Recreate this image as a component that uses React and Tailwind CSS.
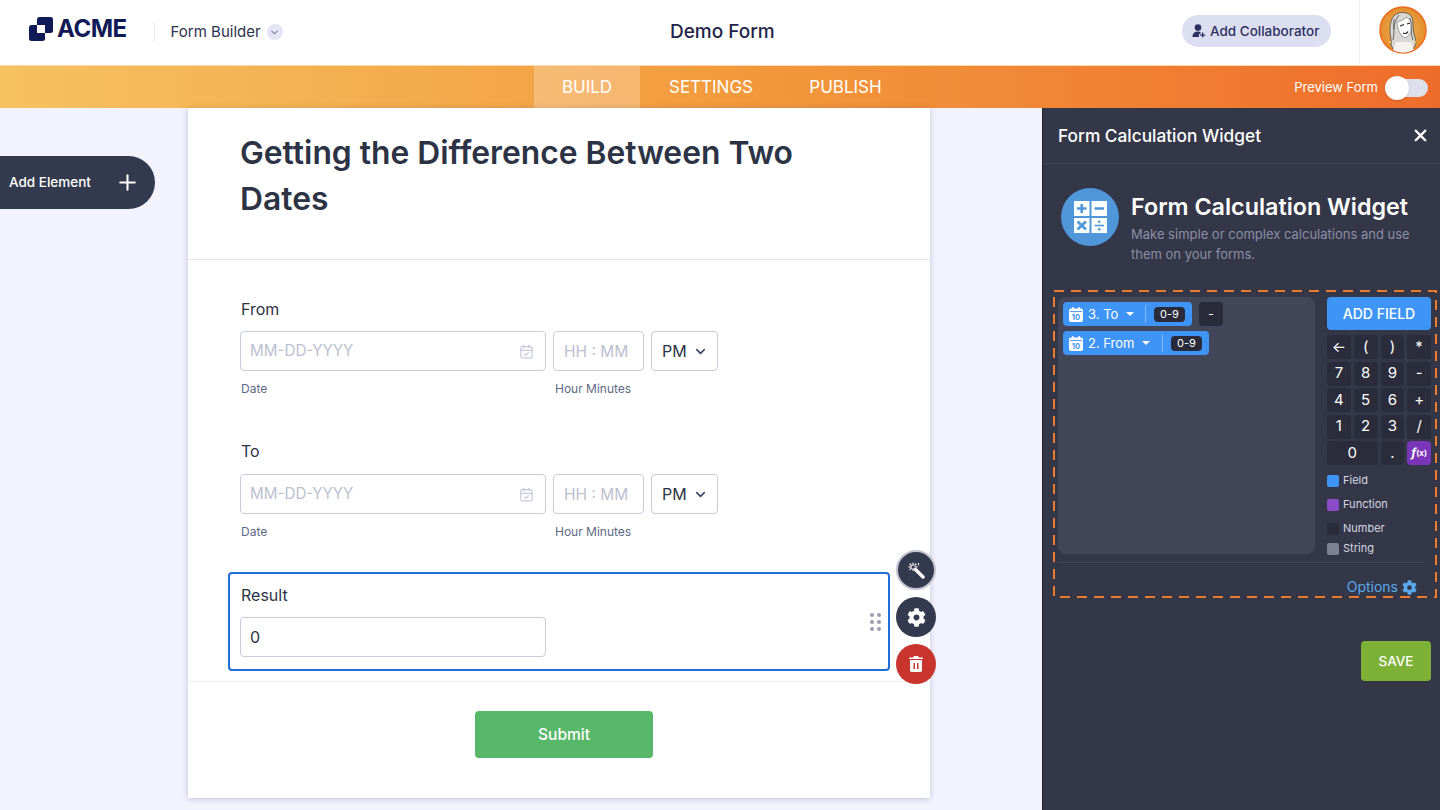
import React from "react";
import { FaCog } from "react-icons/fa";
import { LuCalendarCheck, LuChevronDown, LuPlus } from "react-icons/lu";
import { FaXmark } from "react-icons/fa6";

function Logo() {
  return (
    <svg width="24" height="24" viewBox="0 0 24 24">
      <rect x="8" y="0" width="16" height="16" rx="2.5" fill="#0f1a56" />
      <rect x="0" y="8" width="16" height="16" rx="2.5" fill="#0f1a56" />
      <rect x="8" y="8" width="8" height="8" fill="#fff" />
    </svg>
  );
}

function Avatar() {
  return (
    <svg width="48" height="48" viewBox="0 0 48 48">
      <defs>
        <radialGradient id="avatarBg" cx="50%" cy="50%" r="55%">
          <stop offset="0%" stopColor="#f0b55c" />
          <stop offset="100%" stopColor="#e28a28" />
        </radialGradient>
        <clipPath id="avatarClip">
          <circle cx="24" cy="24" r="22.500" />
        </clipPath>
      </defs>
      <circle cx="24" cy="24" r="23" fill="url(#avatarBg)" stroke="#ee6a1f" strokeWidth="1.500" />
      <g clipPath="url(#avatarClip)">
        <path d="M12 16c1-7 8-11 15-9 5 1 7 5 7 10 0 5 0 9 2 14 1 4 1 7 0 9l-6 8H17l-5-9c1-5-1-9-1-13 0-4 0-7 1-10z" fill="#d9d7d4" stroke="#3a3a3a" strokeWidth="0.700" />
        <path d="M18 16c4-1 8-3 10-5 2 3 4 4 5 6 0 6-1 10-4 13-2 2-5 2-7-1-2-3-4-8-4-13z" fill="#fff" stroke="#555" strokeWidth="0.500" />
        <path d="M21 20l4-1.500M28 18l3-1M24 27c2 1 4 .5 5-1.500" fill="none" stroke="#1f1f1f" strokeWidth="1.200" />
        <path d="M15 13c-1 6 1 14-1 21M20 9c-3 4-5 8-5 14M31 12c2 6 0 14 3 22M18 38c4 3 9 3 12-1" fill="none" stroke="#4a4a4a" strokeWidth="0.800" />
        <path d="M17 36h15l5 14H12z" fill="#f4f2ef" />
        <circle cx="11" cy="36" r="1.100" fill="#f7d46a" />
        <circle cx="36" cy="36" r="1.100" fill="#f7d46a" />
      </g>
    </svg>
  );
}

function UserAdd() {
  return (
    <svg width="14" height="14" viewBox="0 0 14 14" fill="#2d3160">
      <circle cx="6" cy="3.600" r="3.300" />
      <path d="M0.500 13c0-3.500 2-5.500 5.500-5.500 1 0 1.800.2 2.500.5v2H7v3H.5z" />
      <path d="M10 8.500h1.300v1.900h1.900v1.300h-1.900v1.900H10v-1.900H8.100v-1.300H10z" />
    </svg>
  );
}

function WandIcon() {
  return (
    <svg width="17" height="17" viewBox="0 0 17 17" fill="none" stroke="#fff" strokeLinecap="round">
      <path d="M7.500 7.500l7.500 7.500" strokeWidth="3.400" />
      <path d="M5 1v2.500M5 6.500V8.500M1 4.800h2.300M7 4.800h2M2 2l1.400 1.400M2 7.600l1.400-1.400M8 2L6.800 3.200M10.500 1.500v1.200" strokeWidth="1.200" />
    </svg>
  );
}

function TrashIcon() {
  return (
    <svg width="14" height="16" viewBox="0 0 14 16" fill="#fff">
      <path d="M5 0h4l1 1.500h3.300c.4 0 .7.300.7.700v.8H0v-.8c0-.4.300-.7.700-.7H4z" />
      <path d="M1 4h12v10.300c0 .9-.8 1.700-1.700 1.700H2.700C1.800 16 1 15.200 1 14.300zM4.500 7v6H6V7zM8 7v6h1.500V7z" fillRule="evenodd" />
    </svg>
  );
}

function CalcIcon() {
  return (
    <svg width="33" height="32" viewBox="0 0 33 32">
      <rect x="0" y="0" width="15.500" height="15" fill="#fff" />
      <rect x="17.500" y="0" width="15.500" height="15" fill="#fff" />
      <rect x="0" y="17" width="15.500" height="15" fill="#fff" />
      <rect x="17.500" y="17" width="15.500" height="15" fill="#fff" />
      <path d="M3 7.500h9.500M7.750 3v9M20.500 7.500H30M3.500 20.500l8.500 8M12 20.500l-8.500 8" stroke="#4f97d8" strokeWidth="2.600" fill="none" />
      <path d="M20.500 24.500H30" stroke="#4f97d8" strokeWidth="1.600" />
      <circle cx="25.250" cy="20.800" r="1.300" fill="#4f97d8" />
      <circle cx="25.250" cy="28.200" r="1.300" fill="#4f97d8" />
    </svg>
  );
}

function DateField() {
  return (
    <div className="flex gap-[7px]">
      <div>
        <div className="flex h-10 w-[306px] items-center justify-between rounded border border-[#c8cbdb] pl-[9px] pr-[11px] text-[15.200px] text-[#bcc0d0]">
          <span className="pt-px">MM-DD-YYYY</span>
          <LuCalendarCheck className="text-[#c8ccdb]" size={15} />
        </div>
        <div className="mt-[10px] pl-px text-xs leading-4 text-[#606a86]">Date</div>
      </div>
      <div>
        <div className="flex h-10 w-[91px] items-center rounded border border-[#c8cbdb] pl-[10px] text-[15.500px] text-[#bcc0d0]">
          <span className="pt-px">HH : MM</span>
        </div>
        <div className="mt-[10px] pl-[2px] text-xs leading-4 text-[#606a86]">Hour Minutes</div>
      </div>
      <div className="flex h-10 w-[67px] items-center justify-between rounded border border-[#c8cbdb] pl-[10px] pr-[9px] text-base text-[#2c3345]">
        PM
        <LuChevronDown className="text-[#3b4266]" size={15} strokeWidth={2.5} />
      </div>
    </div>
  );
}

function TokenCalendar() {
  return (
    <svg width="14" height="15" viewBox="0 0 14 15">
      <rect x="0" y="1.500" width="14" height="13.500" rx="2" fill="#fff" />
      <rect x="3" y="0" width="1.700" height="3.500" rx="0.800" fill="#fff" />
      <rect x="9.300" y="0" width="1.700" height="3.500" rx="0.800" fill="#fff" />
      <rect x="1" y="4" width="12" height="0.900" fill="#3f95f6" />
      <text x="7" y="12.800" textAnchor="middle" fontSize="7.500" fontWeight="700" fill="#3f95f6" fontFamily="Inter, sans-serif">10</text>
    </svg>
  );
}

function Token({ label, width }) {
  return (
    <div className={`flex h-6 items-center rounded bg-[#3f95f6] pl-[6px] pr-[7px] text-[13px] text-white ${width}`}>
      <TokenCalendar />
      <span className="ml-[5px] pt-px">{label}</span>
      <span className="ml-[8px] h-0 w-0 border-x-[4px] border-t-[4px] border-x-transparent border-t-white" />
      <span className="ml-auto h-[18px] w-px bg-[#7db8fa]" />
      <span className="ml-2 flex h-[15px] w-[31px] items-center justify-center rounded bg-[#292b3a] text-[11px] text-white">0-9</span>
    </div>
  );
}

const keys = ["←", "(", ")", "*", "7", "8", "9", "-", "4", "5", "6", "+", "1", "2", "3", "/"];

const legend = [
  { name: "Field", color: "bg-[#3f95f6]", gap: "mb-[11px]" },
  { name: "Function", color: "bg-[#8b4bc7]", gap: "mb-[11px]" },
  { name: "Number", color: "bg-[#2a2c3b]", gap: "mb-[7px]" },
  { name: "String", color: "bg-[#7d8093]", gap: "" },
];

function App() {
  return (
    <div className="flex h-screen flex-col overflow-hidden bg-white [font-family:Inter,sans-serif]">
      <header className="flex h-[65px] shrink-0 items-center">
        <div className="mb-[1px] flex w-[670px] items-center pl-[29px]">
          <div className="mb-[6px] flex items-center">
            <Logo />
            <span className="ml-1 text-2xl font-bold leading-none tracking-[-0.5px] text-[#0f1a56]">ACME</span>
          </div>
          <span className="ml-[27px] h-5 w-px bg-[#e6e8f2]" />
          <span className="ml-4 text-[15px] text-[#2d3150]">Form Builder</span>
          <span className="ml-[6px] flex h-4 w-4 items-center justify-center rounded-full bg-[#e3e5f5] text-[#3b4266]">
            <LuChevronDown size={11} />
          </span>
        </div>
        <div className="text-[19px] font-medium text-[#1f2547]">Demo Form</div>
        <div className="ml-auto flex h-full items-center">
          <div className="mb-[3px] flex h-8 w-[149px] items-center gap-[4px] rounded-full bg-[#dcdff2] pl-[10px] text-[13.500px] font-medium text-[#2d3160]">
            <UserAdd />
            Add Collaborator
          </div>
          <div className="ml-7 flex h-full w-[81px] items-center border-l border-[#f0f1f5] pb-[5px] pl-[19px]">
            <Avatar />
          </div>
        </div>
      </header>

      <nav className="flex h-[43px] shrink-0 items-stretch border-t border-[#fbd9b0] bg-gradient-to-r from-[#f6c25f] via-[#f29b3d] to-[#ee6c2b] pl-[534px] text-[17px] text-white">
        <div className="flex w-[106px] items-center justify-center bg-white/25 pt-[2px]">BUILD</div>
        <div className="flex w-[142px] items-center justify-center pt-[2px]">SETTINGS</div>
        <div className="flex w-[127px] items-center justify-center pt-[2px]">PUBLISH</div>
        <div className="ml-auto flex items-center pr-3 pt-[2px] text-[13px]">
          Preview Form
          <div className="relative ml-[7px] h-[18px] w-[43px] rounded-full bg-[#dde0ea]">
            <span className="absolute left-0 top-[-3px] h-6 w-6 rounded-full bg-white shadow" />
          </div>
        </div>
      </nav>

      <main className="flex min-h-0 flex-1 bg-[#f3f3fe]">
        <div className="w-[188px] shrink-0 pt-12">
          <div className="flex h-[53px] w-[155px] items-center justify-between rounded-r-full bg-[#343a4e] pl-[9px] pr-[15px] text-[13.500px] font-medium text-white">
            Add Element
            <LuPlus size={25} strokeWidth={2} />
          </div>
        </div>

        <div className="w-[854px] shrink-0">
          <section className="relative h-[690px] w-[742px] bg-white shadow-[0_1px_6px_rgba(40,50,90,0.25)]">
            <div className="h-[152px] border-b border-[#e2e4ec] pl-[52px] pr-[100px] pt-[22px]">
              <h1 className="text-[31.800px] font-semibold leading-[46px] text-[#2c3345]">
                Getting the Difference Between Two Dates
              </h1>
            </div>

            <div className="pl-[52px] pt-[39px]">
              <div className="mb-3 pl-px text-base leading-5 text-[#2c3345]">From</div>
              <DateField />
            </div>

            <div className="pl-[52px] pt-[44px]">
              <div className="mb-[13px] pl-px text-base leading-5 text-[#2c3345]">To</div>
              <DateField />
            </div>

            <div className="relative ml-10 mt-[32px] h-[99px] w-[662px] rounded border-2 border-[#1f6fd6] pl-[10px] pt-[11px]">
              <div className="mb-3 pl-px text-base leading-5 text-[#2c3345]">Result</div>
              <div className="flex h-10 w-[306px] items-center rounded border border-[#c8cbdb] pl-[9px] text-base text-[#2c3345]">
                0
              </div>
              <div className="absolute right-[7px] top-[39px] grid grid-cols-2 gap-[3px]">
                {[0, 1, 2, 3, 4, 5].map((dot) => (
                  <span key={dot} className="h-[4px] w-[4px] rounded-full bg-[#9a9eb0]" />
                ))}
              </div>
            </div>

            <div className="absolute left-[708px] top-[442px] flex flex-col gap-[7px]">
              <span className="flex h-10 w-10 items-center justify-center rounded-full border-2 border-[#c3c6d2] bg-[#343a4e]">
                <WandIcon />
              </span>
              <span className="flex h-10 w-10 items-center justify-center rounded-full bg-[#343a4e] text-white">
                <FaCog size={19} />
              </span>
              <span className="flex h-10 w-10 items-center justify-center rounded-full bg-[#c9342d] text-white">
                <TrashIcon />
              </span>
            </div>

            <div className="mt-[10px] flex justify-center border-t border-[#eceef3] pl-[10px] pt-[29px]">
              <button className="h-[47px] w-[178px] rounded-sm bg-[#56b868] text-[15.500px] font-medium text-white">
                Submit
              </button>
            </div>
          </section>
        </div>

        <aside className="w-[398px] shrink-0 border-l border-[#22242f] bg-[#343748] text-white">
          <div className="flex h-[56px] items-center justify-between border-b border-[#43465a] pl-[15px] pr-[10px]">
            <span className="text-[17.300px] font-medium">Form Calculation Widget</span>
            <FaXmark size={19} />
          </div>

          <div className="flex pl-[18px] pt-6">
            <div className="flex h-[58px] w-[58px] shrink-0 items-center justify-center rounded-full bg-[#4f97d8]">
              <CalcIcon />
            </div>
            <div className="ml-3 w-[300px] pt-[5px]">
              <div className="text-[23.300px] font-semibold leading-7">Form Calculation Widget</div>
              <p className="mt-[3px] text-[13px] leading-5 text-[#8b8fa6]">
                Make simple or complex calculations and use them on your forms.
              </p>
            </div>
          </div>

          <div className="relative ml-[10px] mt-[26px] h-[308px] w-[384px] px-[5px] pt-[7px]">
            <svg className="absolute left-0 top-0" width="384" height="308" fill="none">
              <rect x="1" y="1" width="382" height="306" stroke="#ee7a2d" strokeWidth="2" strokeDasharray="10 7" />
            </svg>
            <div className="flex">
              <div className="h-[257px] w-[257px] rounded-lg bg-[#434659] pl-[5px] pt-[5px]">
                <div className="flex items-center gap-[7px]">
                  <Token label="3. To" width="w-[129px]" />
                  <span className="flex h-6 w-6 items-center justify-center rounded bg-[#292b3a] text-xs">-</span>
                </div>
                <div className="mt-[5px]">
                  <Token label="2. From" width="w-[146px]" />
                </div>
              </div>

              <div className="ml-3 w-[104px]">
                <button className="h-[33px] w-[104px] rounded bg-[#3f95f6] text-sm font-medium">ADD FIELD</button>
                <div className="mt-[5px] grid grid-cols-4 gap-x-[3px] gap-y-[2.500px]">
                  {keys.map((key) => (
                    <span key={key} className="flex h-6 items-center justify-center rounded-sm bg-[#2a2c3b] text-[15px]">
                      {key}
                    </span>
                  ))}
                  <span className="col-span-2 flex h-6 items-center justify-center rounded-sm bg-[#2a2c3b] text-[15px]">0</span>
                  <span className="flex h-6 items-center justify-center rounded-sm bg-[#2a2c3b] text-[15px]">.</span>
                  <span className="flex h-6 items-center justify-center rounded-sm bg-[#7b35b8] font-bold">
                    <span className="text-[12px] italic">f</span>
                    <span className="text-[8px]">(x)</span>
                  </span>
                </div>
                <div className="mt-[9px]">
                  {legend.map((item) => (
                    <div key={item.name} className={`flex h-[13px] items-center gap-[4px] text-[11px] text-[#d5d7e2] ${item.gap}`}>
                      <span className={`h-3 w-3 rounded-[2px] ${item.color}`} />
                      {item.name}
                    </div>
                  ))}
                </div>
              </div>
            </div>
            <div className="mt-[7px] h-px w-[366px] bg-[#43465a]" />
            <div className="flex w-[359px] items-center justify-end gap-[4px] pt-[14px] text-sm leading-5 text-[#5aa9ec]">
              Options
              <FaCog size={15} />
            </div>
          </div>

          <div className="flex justify-end pr-[9px] pt-[43px]">
            <button className="h-10 w-[70px] rounded bg-[#7cb135] text-[13.500px] font-medium">SAVE</button>
          </div>
        </aside>
      </main>
    </div>
  );
}

export default App;
